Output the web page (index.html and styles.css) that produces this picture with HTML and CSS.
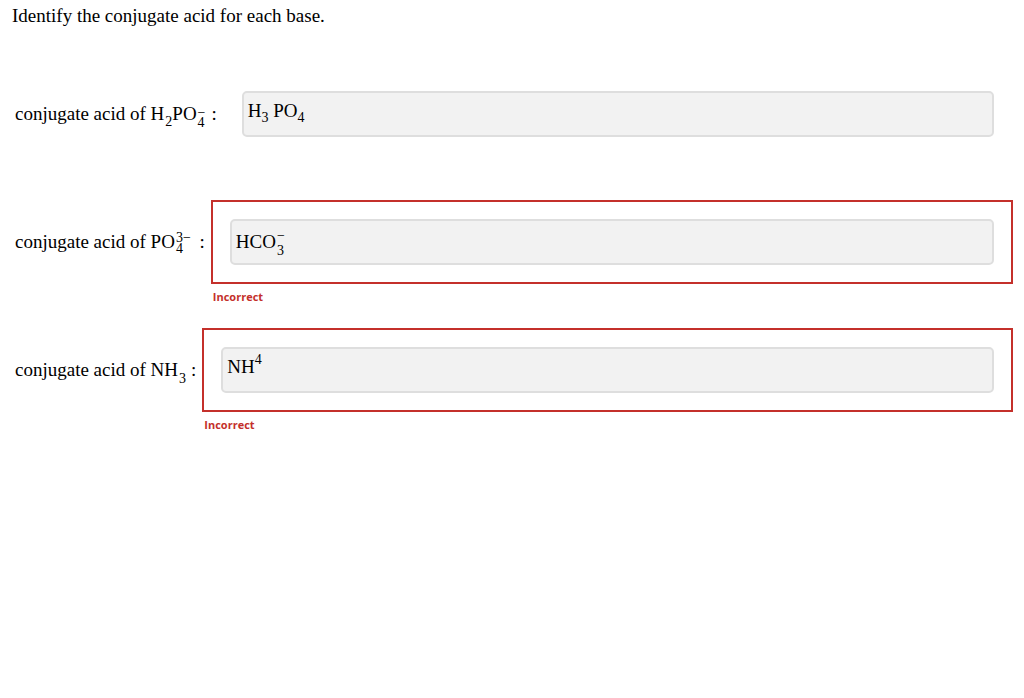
FILE: index.html
```html
<!DOCTYPE html>
<html lang="en">
<head>
<meta charset="utf-8">
<title>Conjugate acids</title>
<link rel="stylesheet" href="styles.css">
</head>
<body>
<div class="page">
  <p class="prompt">Identify the conjugate acid for each base.</p>

  <div class="row">
    <div class="label">conjugate acid of H<span class="sub">2</span>PO<span class="stk stk-l1"><span>−</span><span>4</span></span><span class="rel">:</span></div>
    <div class="field">
      <div class="box">
        <div class="answer">H<span class="sub sub-in">3</span> PO<span class="sub sub-in">4</span></div>
      </div>
      <div class="feedback"></div>
    </div>
  </div>

  <div class="row">
    <div class="label">conjugate acid of PO<span class="stk stk-l2"><span>3−</span><span>4</span></span> <span class="rel">:</span></div>
    <div class="field">
      <div class="box wrong">
        <div class="answer">HCO<span class="stk stk-in"><span>−</span><span>3</span></span></div>
      </div>
      <div class="feedback">Incorrect</div>
    </div>
  </div>

  <div class="row">
    <div class="label">conjugate acid of NH<span class="sub sub-l3">3</span><span class="rel">:</span></div>
    <div class="field">
      <div class="box wrong">
        <div class="answer">NH<span class="sup">4</span></div>
      </div>
      <div class="feedback">Incorrect</div>
    </div>
  </div>
</div>
</body>
</html>
```

FILE: styles.css
```css
html, body {
  margin: 0;
  padding: 0;
  background: #ffffff;
}

.page {
  padding: 5px 11px 0 12px;
  font-family: "Liberation Serif", "Times New Roman", serif;
  font-size: 19px;
  color: #000;
}

.prompt {
  margin: 0 0 45px 0;
  line-height: 22px;
}

.row {
  display: flex;
  align-items: flex-start;
  margin-left: 3px;
}

.label {
  padding-top: 31px;
  line-height: 22px;
  white-space: nowrap;
  margin-right: 6px;
}

.rel {
  margin-left: 4px;
}

.field {
  flex: 1;
  display: flex;
  flex-direction: column;
}

.box {
  border: 2px solid transparent;
  padding: 17px;
}

.box.wrong {
  border-color: #c4302b;
}

.answer {
  box-sizing: border-box;
  height: 46px;
  border: 2px solid #dedede;
  border-radius: 5px;
  background: #f2f2f2;
  padding: 7px 4px 0 4px;
  line-height: 22px;
  white-space: nowrap;
}

.feedback {
  margin: 5px 0 24px 2px;
  height: 15px;
  font-family: "Open Sans", "Liberation Sans", sans-serif;
  font-weight: 700;
  font-size: 11px;
  line-height: 15px;
  color: #c4302b;
}

.sub,
.sup {
  font-size: 14px;
  line-height: 0;
}

.sub {
  vertical-align: -6px;
  margin-left: 1px;
}

.sub-l3 {
  vertical-align: -7px;
  margin-right: 1px;
}

.sub-in {
  vertical-align: -4.5px;
  margin-left: 0;
}

.sup {
  vertical-align: 9.5px;
}

.stk {
  display: inline-block;
  font-size: 14px;
  line-height: 10px;
  text-align: left;
  margin-left: 1px;
}

.stk > span {
  display: block;
}

.stk-l1 {
  vertical-align: -6.5px;
  margin-right: 2px;
}

.stk-l2 {
  line-height: 11px;
  vertical-align: -5px;
}

.stk-in {
  line-height: 15px;
  vertical-align: -7px;
}
```
